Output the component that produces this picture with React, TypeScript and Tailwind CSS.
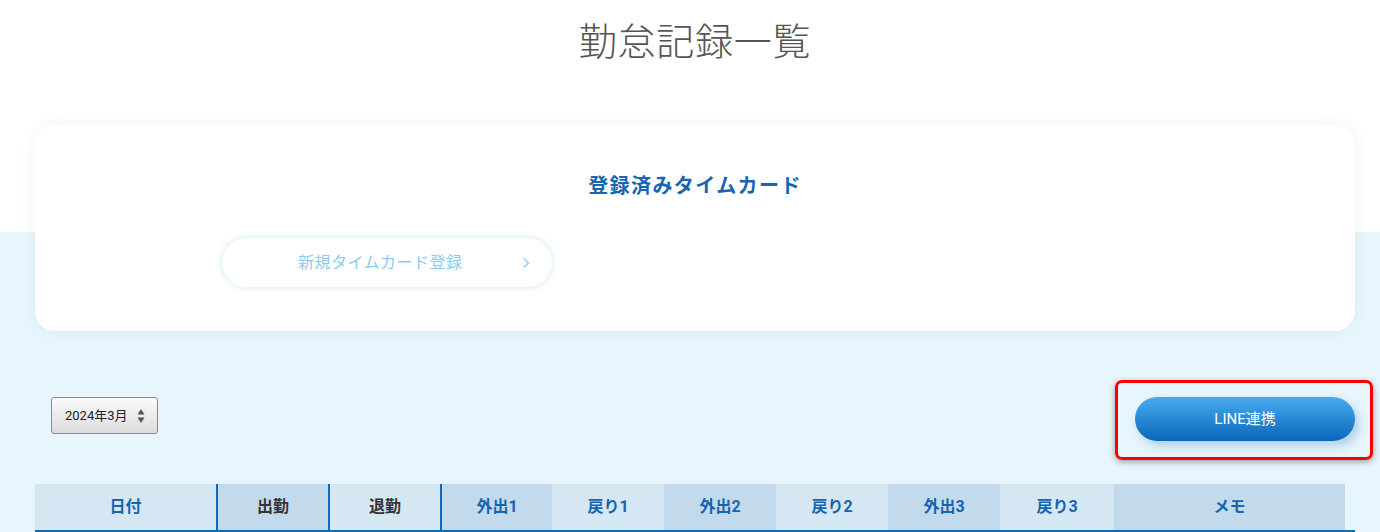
const font = { fontFamily: 'Roboto, "Noto Sans CJK JP", sans-serif' }

const columns = [
  { label: '日付', w: 'w-[181px]', bg: 'bg-[#d5e7f3]', text: 'text-[#1565b0]', border: false },
  { label: '出勤', w: 'w-[112px]', bg: 'bg-[#c3daed]', text: 'text-[#333333]', border: true },
  { label: '退勤', w: 'w-[112px]', bg: 'bg-[#d5e7f3]', text: 'text-[#333333]', border: true },
  { label: '外出1', w: 'w-[112px]', bg: 'bg-[#c3daed]', text: 'text-[#1565b0]', border: true },
  { label: '戻り1', w: 'w-[112px]', bg: 'bg-[#d5e7f3]', text: 'text-[#1565b0]', border: false },
  { label: '外出2', w: 'w-[112px]', bg: 'bg-[#c3daed]', text: 'text-[#1565b0]', border: false },
  { label: '戻り2', w: 'w-[112px]', bg: 'bg-[#d5e7f3]', text: 'text-[#1565b0]', border: false },
  { label: '外出3', w: 'w-[112px]', bg: 'bg-[#c3daed]', text: 'text-[#1565b0]', border: false },
  { label: '戻り3', w: 'w-[114px]', bg: 'bg-[#d5e7f3]', text: 'text-[#1565b0]', border: false },
  { label: 'メモ', w: 'w-[231px]', bg: 'bg-[#c3daed]', text: 'text-[#1565b0]', border: false },
]

export default function App() {
  return (
    <div
      className="min-h-screen w-[1380px] bg-[linear-gradient(to_bottom,#ffffff_232px,#e7f5fc_232px)]"
      style={font}
    >
      <h1 className="pl-[10px] pt-[16px] text-center text-[38px] font-light leading-[52px] tracking-[0.02em] text-[#555555]">
        勤怠記録一覧
      </h1>

      <div className="ml-[35px] mr-[25px] mt-[57px] h-[206px] rounded-[20px] bg-white pt-[47px] shadow-[0_0_18px_rgba(0,0,0,0.05)]">
        <h2 className="text-center text-[20px] font-bold leading-[28px] tracking-[0.07em] text-[#1766b1]">
          登録済みタイムカード
        </h2>
        <div className="ml-[187px] mt-[38px] flex h-[49px] w-[330px] items-center rounded-full bg-white shadow-[0_0_6px_rgba(140,200,240,0.45)]">
          <span className="ml-[76px] text-[16px] tracking-[0.03em] text-[#8ccaf0]">新規タイムカード登録</span>
          <svg width="8" height="12" viewBox="0 0 8 12" className="ml-auto mr-[22px]">
            <path d="M1.5 1.5 L6.5 6 L1.5 10.5" fill="none" stroke="#8ccaf0" strokeWidth="1.3" />
          </svg>
        </div>
      </div>

      <div className="ml-[35px] mr-[25px] mt-[66px] flex items-start justify-between">
        <div className="ml-[16px] flex h-[37px] w-[107px] items-center rounded-[3px] border border-[#8a8a8a] bg-[linear-gradient(to_bottom,#fbfbfb,#dcdcdc)] pl-[13px]">
          <span className="text-[13px] text-[#222222]">2024年3月</span>
          <svg width="8" height="18" viewBox="0 0 8 18" className="ml-[9px]">
            <path d="M4 2 L7.5 7.5 L0.5 7.5 Z" fill="#555555" />
            <path d="M4 16 L7.5 10.5 L0.5 10.5 Z" fill="#555555" />
          </svg>
        </div>

        <div className="relative">
          <button className="h-[44px] w-[220px] rounded-full bg-[linear-gradient(to_bottom,#4aaaef,#0867b8)] text-[15px] text-white shadow-[4px_5px_8px_rgba(70,140,200,0.35)]">
            LINE連携
          </button>
          <div className="absolute -left-[20px] -top-[17px] h-[80px] w-[258px] rounded-[7px] border-[3px] border-[#ff0000] shadow-[0_2px_6px_rgba(0,0,0,0.35)]" />
        </div>
      </div>

      <div className="ml-[35px] mr-[25px] mt-[43px] flex h-[48px] border-b-2 border-[#0a6cbc]">
        {columns.map((c) => (
          <div
            key={c.label}
            className={`${c.w} ${c.bg} ${c.text} flex items-center justify-center text-[16px] font-bold ${c.border ? 'border-l-2 border-[#0a6cbc]' : ''}`}
          >
            {c.label}
          </div>
        ))}
      </div>
    </div>
  )
}
